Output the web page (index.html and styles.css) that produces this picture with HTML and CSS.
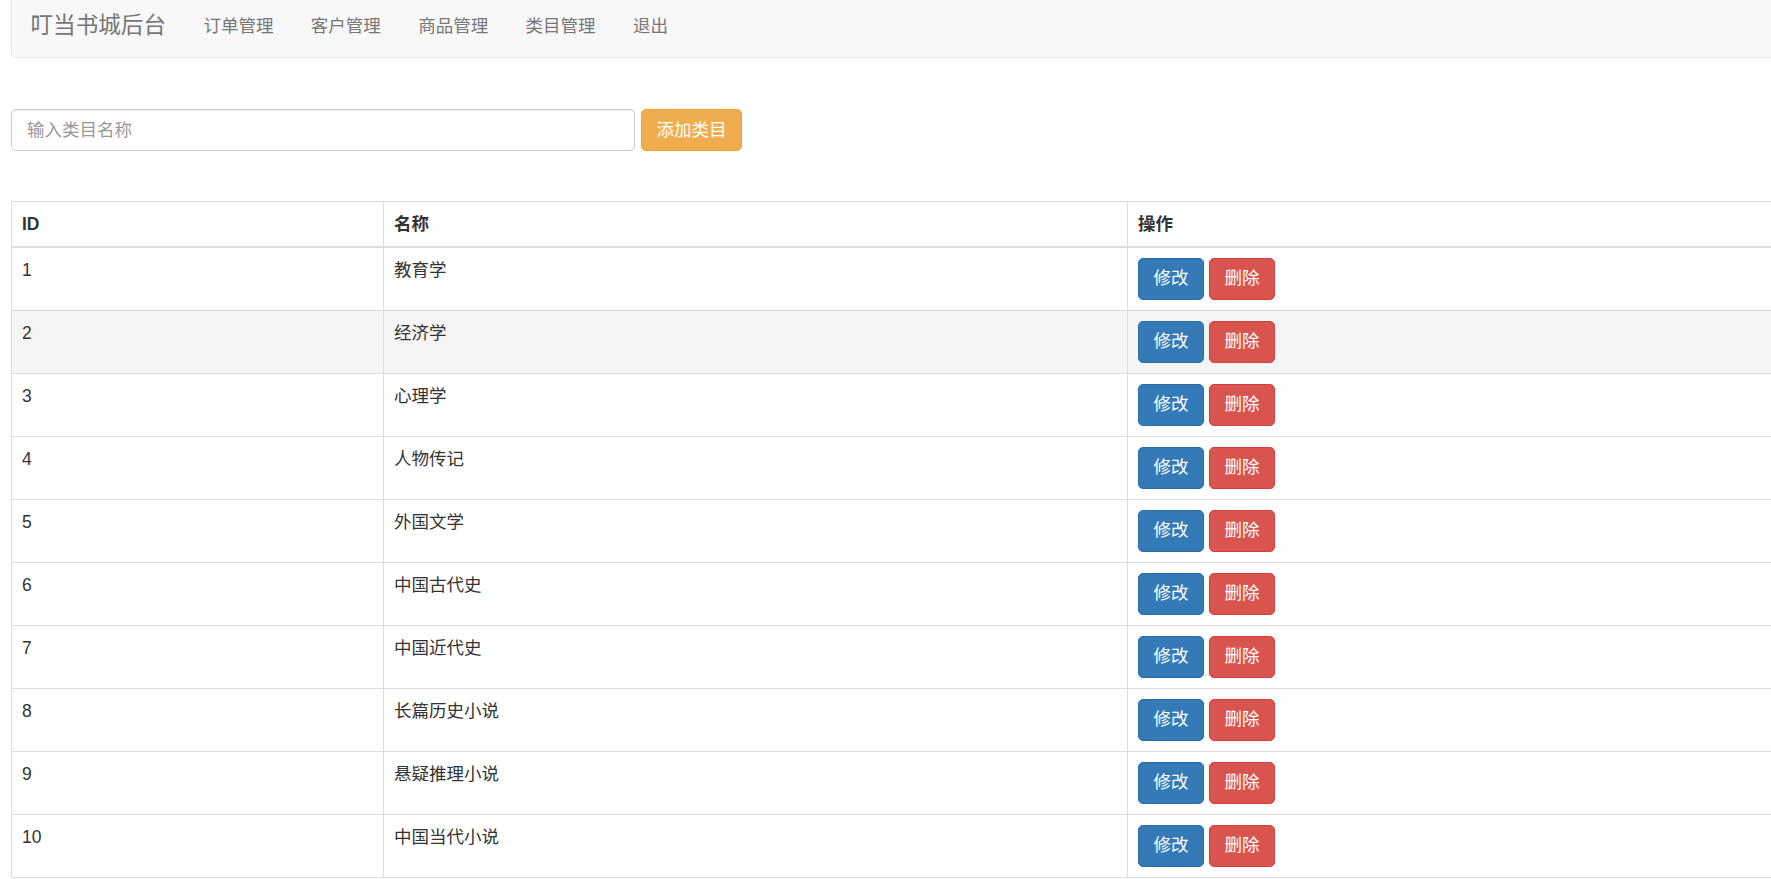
FILE: index.html
```html
<!DOCTYPE html>
<html lang="zh-CN">
<head>
    <meta charset="UTF-8">
    <meta name="viewport" content="width=device-width, initial-scale=1.0">
    <title>叮当书城后台</title>
    <link rel="stylesheet" href="styles.css">
</head>
<body>
    <div class="page">
        <nav class="navbar">
            <a class="navbar-brand" href="#">叮当书城后台</a>
            <ul class="nav">
                <li><a href="#">订单管理</a></li>
                <li><a href="#">客户管理</a></li>
                <li><a href="#">商品管理</a></li>
                <li><a href="#">类目管理</a></li>
                <li><a href="#">退出</a></li>
            </ul>
        </nav>

        <form class="add-form">
            <input class="form-control" type="text" placeholder="输入类目名称">
            <button class="btn btn-warning" type="button">添加类目</button>
        </form>

        <table class="table">
            <thead>
                <tr>
                    <th class="col-id">ID</th>
                    <th class="col-name">名称</th>
                    <th>操作</th>
                </tr>
            </thead>
            <tbody>
                <tr>
                    <td>1</td>
                    <td>教育学</td>
                    <td><div class="actions"><button class="btn btn-primary">修改</button><button class="btn btn-danger">删除</button></div></td>
                </tr>
                <tr class="hover">
                    <td>2</td>
                    <td>经济学</td>
                    <td><div class="actions"><button class="btn btn-primary">修改</button><button class="btn btn-danger">删除</button></div></td>
                </tr>
                <tr>
                    <td>3</td>
                    <td>心理学</td>
                    <td><div class="actions"><button class="btn btn-primary">修改</button><button class="btn btn-danger">删除</button></div></td>
                </tr>
                <tr>
                    <td>4</td>
                    <td>人物传记</td>
                    <td><div class="actions"><button class="btn btn-primary">修改</button><button class="btn btn-danger">删除</button></div></td>
                </tr>
                <tr>
                    <td>5</td>
                    <td>外国文学</td>
                    <td><div class="actions"><button class="btn btn-primary">修改</button><button class="btn btn-danger">删除</button></div></td>
                </tr>
                <tr>
                    <td>6</td>
                    <td>中国古代史</td>
                    <td><div class="actions"><button class="btn btn-primary">修改</button><button class="btn btn-danger">删除</button></div></td>
                </tr>
                <tr>
                    <td>7</td>
                    <td>中国近代史</td>
                    <td><div class="actions"><button class="btn btn-primary">修改</button><button class="btn btn-danger">删除</button></div></td>
                </tr>
                <tr>
                    <td>8</td>
                    <td>长篇历史小说</td>
                    <td><div class="actions"><button class="btn btn-primary">修改</button><button class="btn btn-danger">删除</button></div></td>
                </tr>
                <tr>
                    <td>9</td>
                    <td>悬疑推理小说</td>
                    <td><div class="actions"><button class="btn btn-primary">修改</button><button class="btn btn-danger">删除</button></div></td>
                </tr>
                <tr>
                    <td>10</td>
                    <td>中国当代小说</td>
                    <td><div class="actions"><button class="btn btn-primary">修改</button><button class="btn btn-danger">删除</button></div></td>
                </tr>
            </tbody>
        </table>
    </div>
</body>
</html>
```

FILE: styles.css
```css
html, body {
    margin: 0;
    padding: 0;
    overflow: hidden;
}

body {
    font-family: "Liberation Sans", "Noto Sans CJK SC", sans-serif;
    font-size: 17.5px;
    line-height: 24.6px;
    color: #333;
    background: #fff;
}

.page {
    width: 1820px;
    padding-left: 11px;
}

/* navbar */
.navbar {
    display: flex;
    align-items: flex-start;
    margin-top: -6px;
    height: 62px;
    background: #f8f8f8;
    border: 1px solid #e7e7e7;
    border-radius: 5px;
}

.navbar a {
    text-decoration: none;
    color: #777;
}

.navbar-brand {
    padding: 18.5px 18.7px 18.5px 18.5px;
    font-size: 22.6px;
    line-height: 24.6px;
}

.nav {
    display: flex;
    list-style: none;
    margin: 0;
    padding: 0;
}

.nav a {
    display: block;
    padding: 18.5px 18.7px;
    line-height: 24.6px;
}

/* add form */
.add-form {
    display: flex;
    gap: 6px;
    margin: 51px 0 50px;
}

.form-control {
    box-sizing: border-box;
    width: 624px;
    height: 42px;
    padding: 7px 15px;
    font-family: inherit;
    font-size: 17.5px;
    color: #555;
    border: 1px solid #ccc;
    border-radius: 5px;
    box-shadow: inset 0 1px 1px rgba(0, 0, 0, 0.075);
    outline: none;
}

.form-control::placeholder {
    color: #999;
}

/* buttons */
.btn {
    box-sizing: border-box;
    height: 42px;
    padding: 7.7px 14.5px;
    font-family: inherit;
    font-size: 17.5px;
    line-height: 24.6px;
    color: #fff;
    border: 1px solid transparent;
    border-radius: 5px;
    cursor: pointer;
}

.btn-warning {
    background: #f0ad4e;
    border-color: #eea236;
}

.btn-primary {
    background: #337ab7;
    border-color: #2e6da4;
}

.btn-danger {
    background: #d9534f;
    border-color: #d43f3a;
}

/* table */
.table {
    width: 100%;
    border-collapse: collapse;
    border: 1px solid #ddd;
}

.table th,
.table td {
    text-align: left;
    vertical-align: top;
    border: 1px solid #ddd;
    padding: 10px;
}

.table th {
    padding: 9.5px 10px;
    font-weight: bold;
    border-bottom-width: 2px;
}

.col-id {
    width: 351px;
}

.col-name {
    width: 723px;
}

.table tr.hover td {
    background: #f5f5f5;
}

.actions {
    display: flex;
    gap: 5px;
}
```
